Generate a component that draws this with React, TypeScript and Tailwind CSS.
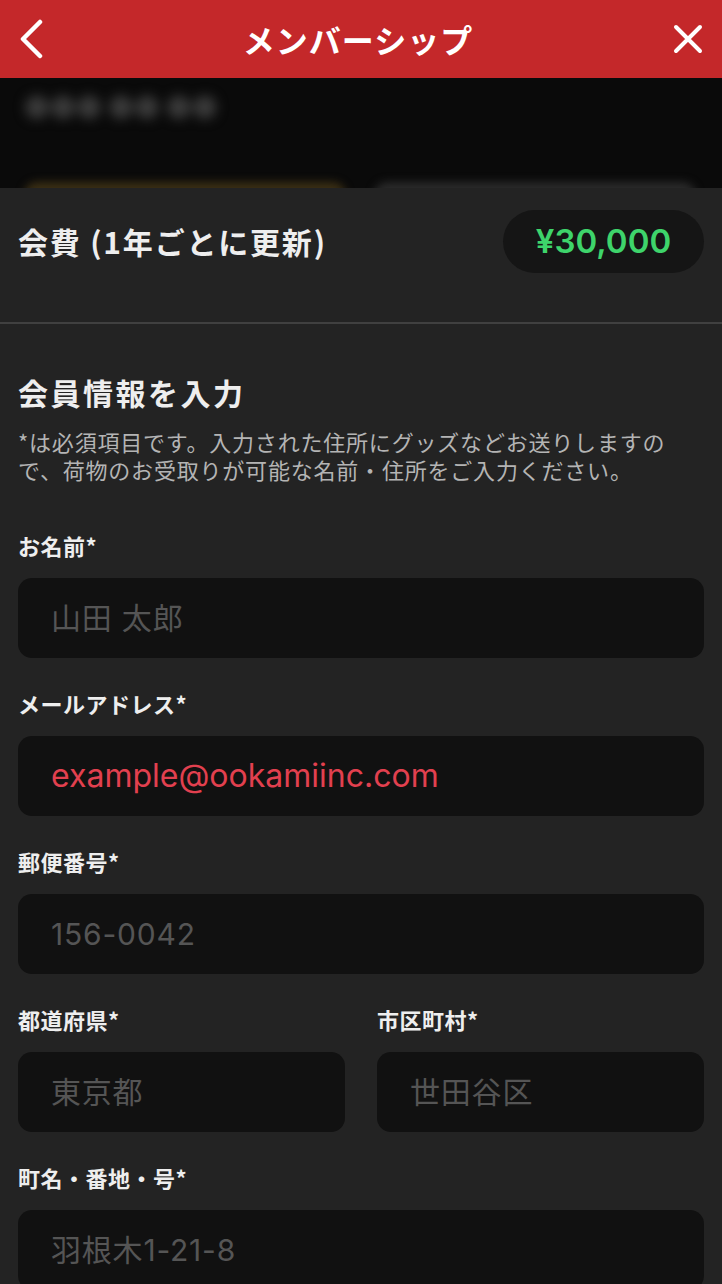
import React from "react";

type Field = {
  label: string;
  value: string;
  filled?: boolean;
};

function Input({ label, value, filled }: Field) {
  return (
    <div className="flex flex-col">
      <label className="h-[28px] text-[22px] font-bold leading-[28px] tracking-[0.5px] text-[#eeeeee]">
        {label}
      </label>
      <div className="mt-[19px] flex h-[80px] items-center rounded-[14px] bg-[#111111] px-[33px]">
        <span
          className={
            filled
              ? "font-['Inter','Noto_Sans_CJK_JP',sans-serif] text-[32px] text-[#e2404f]"
              : "font-['Inter','Noto_Sans_CJK_JP',sans-serif] text-[30px] tracking-[0.8px] text-[#555555]"
          }
        >
          {value}
        </span>
      </div>
    </div>
  );
}

export default function App() {
  return (
    <div className="flex h-[1284px] w-[722px] flex-col overflow-hidden bg-[#232323] font-['Noto_Sans_CJK_JP','Noto_Sans',sans-serif]">
      {/* header */}
      <div className="flex h-[78px] shrink-0 items-center justify-between bg-[#c4282a] px-[18px]">
        <svg width="26" height="40" viewBox="0 0 26 40" fill="none">
          <path
            d="M22 3 L5 20 L22 37"
            stroke="white"
            strokeWidth="4.5"
            strokeLinecap="round"
            strokeLinejoin="round"
          />
        </svg>
        <h1 className="text-[32px] font-bold tracking-[1px] text-white">
          メンバーシップ
        </h1>
        <svg width="32" height="32" viewBox="0 0 32 32" fill="none">
          <path
            d="M4 4 L28 28 M28 4 L4 28"
            stroke="white"
            strokeWidth="4"
            strokeLinecap="round"
          />
        </svg>
      </div>

      {/* content behind the sheet */}
      <div className="relative h-[110px] shrink-0 overflow-hidden bg-[#0a0a0a]">
        <div className="absolute left-[24px] top-[8px] text-[26px] font-bold text-[#3a3a3a] blur-[6px]">
          ●●● ●● ●●
        </div>
        <div className="absolute bottom-[-20px] left-[24px] h-[26px] w-[322px] rounded-t-[14px] bg-[#3b2f14] blur-[4px]" />
        <div className="absolute bottom-[-20px] left-[374px] h-[26px] w-[322px] rounded-t-[14px] bg-[#2a2a2a] blur-[4px]" />
      </div>

      {/* sheet */}
      <div className="flex flex-1 flex-col">
        <div className="flex items-center justify-between px-[18px] pb-[49px] pt-[22px]">
          <span className="text-[30px] font-bold tracking-[1.8px] text-[#eeeeee]">
            会費 (1年ごとに更新)
          </span>
          <div className="flex h-[63px] w-[201px] items-center justify-center rounded-full bg-[#151515]">
            <span className="font-['Inter',sans-serif] text-[33px] font-semibold text-[#3ed46b]">
              ¥30,000
            </span>
          </div>
        </div>
        <div className="h-[2px] bg-[#404040]" />

        <div className="flex flex-col px-[18px] pt-[48px]">
          <h2 className="h-[40px] text-[30px] font-bold leading-[40px] tracking-[2.5px] text-[#eeeeee]">
            会員情報を入力
          </h2>
          <div className="mt-[15px] flex flex-col text-[22px] tracking-[0.8px] text-[#b4b4b4]">
            <span className="h-[28px] leading-[28px]">
              *は必須項目です。入力された住所にグッズなどお送りしますの
            </span>
            <span className="h-[28px] leading-[28px]">
              で、荷物のお受取りが可能な名前・住所をご入力ください。
            </span>
          </div>

          <div className="mt-[48px] flex flex-col gap-[31px]">
            <Input label="お名前*" value="山田 太郎" />
            <Input label="メールアドレス*" value="example@ookamiinc.com" filled />
            <Input label="郵便番号*" value="156-0042" />
            <div className="grid grid-cols-2 gap-[32px]">
              <Input label="都道府県*" value="東京都" />
              <Input label="市区町村*" value="世田谷区" />
            </div>
            <Input label="町名・番地・号*" value="羽根木1-21-8" />
          </div>
        </div>
      </div>
    </div>
  );
}
